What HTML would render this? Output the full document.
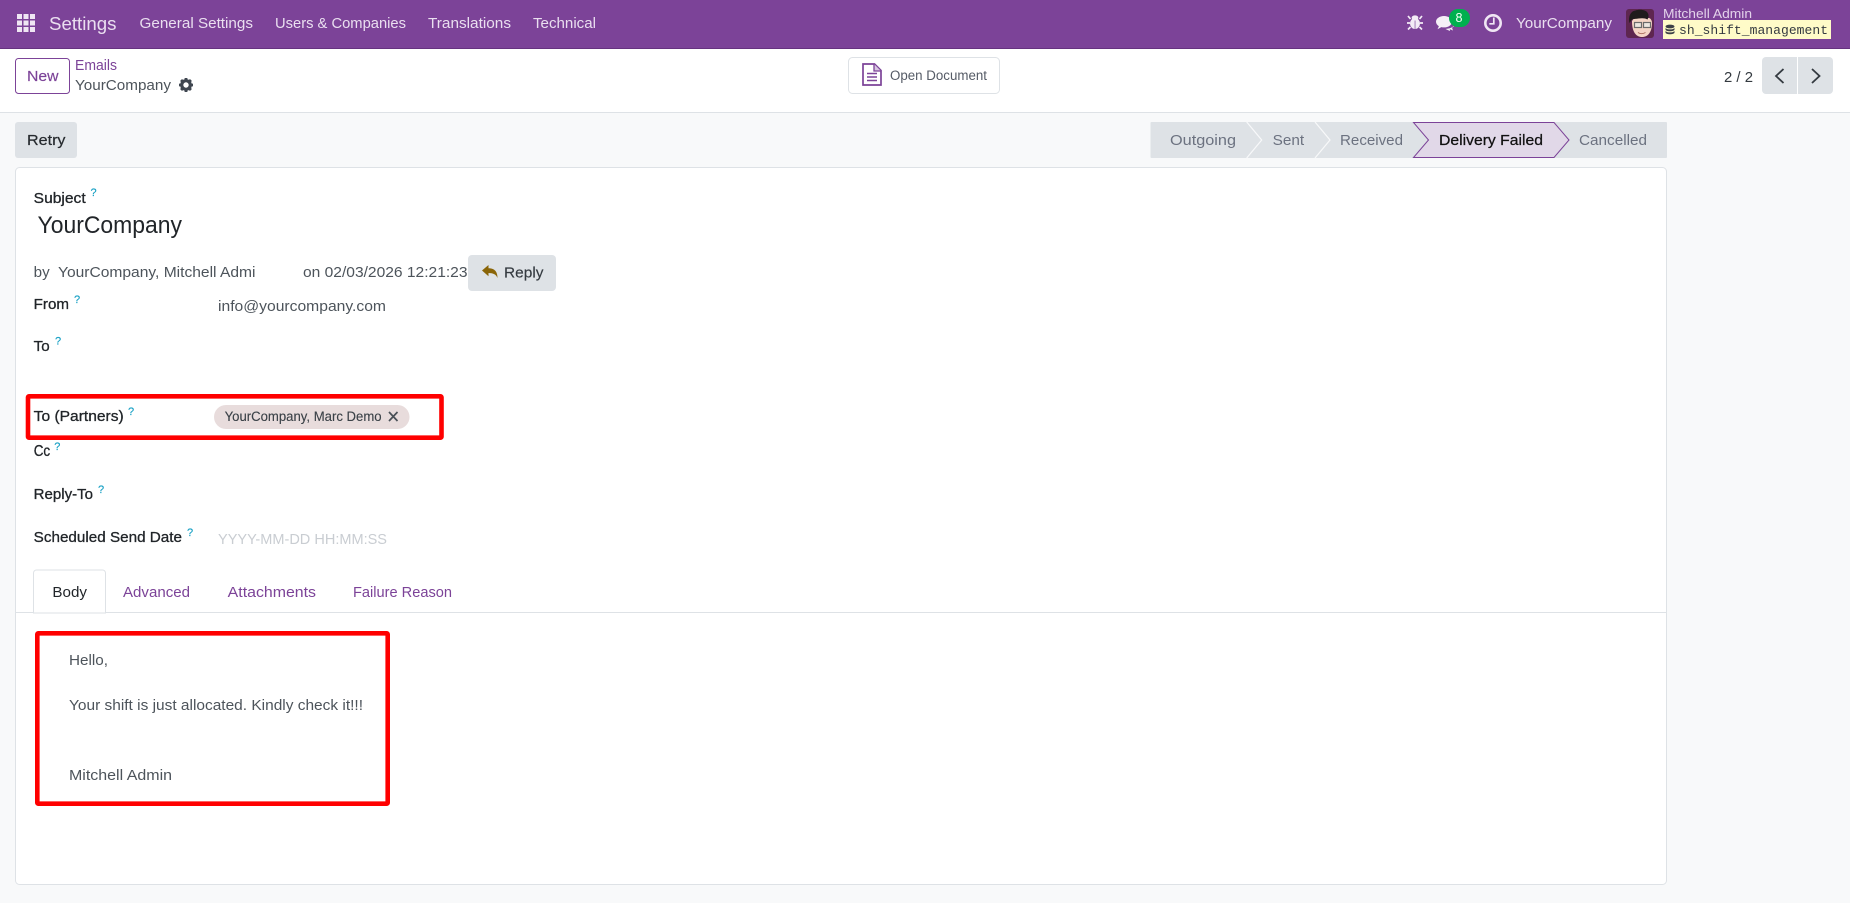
<!DOCTYPE html>
<html lang="en"><head><meta charset="utf-8"><title>Emails - YourCompany</title>
<style>
html,body{margin:0;padding:0;width:1850px;height:903px;overflow:hidden;background:#f8f9fa}
svg{display:block}
text{font-family:"Liberation Sans",sans-serif;font-size:15px;fill:#4d545b}
.nav{fill:#eadff0}
.lbl{fill:#212529;stroke:#212529;stroke-width:.3px}
.q{fill:#17a0c4;font-size:11px;stroke:#17a0c4;stroke-width:.15px}
.p{fill:#7c4398}
.st{fill:#6c7280}
</style></head><body>
<svg width="1850" height="903" viewBox="0 0 1850 903" xmlns="http://www.w3.org/2000/svg">
<!-- navbar -->
<rect width="1850" height="49" fill="#7c4398"/>
<rect y="48" width="1850" height="1" fill="#66337f"/>
<g fill="#efe6f3">
<rect x="17" y="14" width="5" height="5"/><rect x="23.5" y="14" width="5" height="5"/><rect x="30" y="14" width="5" height="5"/>
<rect x="17" y="20.5" width="5" height="5"/><rect x="23.5" y="20.5" width="5" height="5"/><rect x="30" y="20.5" width="5" height="5"/>
<rect x="17" y="27" width="5" height="5"/><rect x="23.5" y="27" width="5" height="5"/><rect x="30" y="27" width="5" height="5"/>
</g>
<text class="nav" x="49" y="30" style="font-size:18px" textLength="67.5" lengthAdjust="spacingAndGlyphs">Settings</text>
<text class="nav" x="139.5" y="28" textLength="113.5" lengthAdjust="spacingAndGlyphs">General Settings</text>
<text class="nav" x="275" y="28" textLength="131" lengthAdjust="spacingAndGlyphs">Users &amp; Companies</text>
<text class="nav" x="428" y="28" textLength="83" lengthAdjust="spacingAndGlyphs">Translations</text>
<text class="nav" x="533" y="28" textLength="63" lengthAdjust="spacingAndGlyphs">Technical</text>
<!-- bug -->
<g fill="#f3ecf6" stroke="#f3ecf6">
<ellipse cx="1415" cy="23.500" rx="5" ry="5.500" stroke="none"/>
<ellipse cx="1415" cy="17.800" rx="3.400" ry="2.400" stroke="none"/>
<path d="M1410.500 19l-2.500-3M1419.500 19l2.500-3M1410 23h-3M1420 23h3M1410.500 27l-2.500 2.500M1419.500 27l2.500 2.500" stroke-width="1.700" fill="none"/>
</g>
<rect x="1414.600" y="20.500" width=".9" height="8.500" fill="#9a6fb0"/>
<!-- chat -->
<path d="M1444 16c-4.500 0-8 2.600-8 5.800 0 1.800 1.100 3.400 2.900 4.400l-1.400 3 3.800-2.100c.9.200 1.800.3 2.700.3 4.500 0 8-2.600 8-5.700s-3.500-5.700-8-5.700z" fill="#f5eff7"/>
<path d="M1455 22.500c0 3-2.800 5.500-6.500 6l-3 .5 4.500 2-.2-1.900 3.200 1.400-1-2.800c1.800-.9 3-2.400 3-4.200z" fill="#f5eff7"/>
<rect x="1449" y="9" width="21" height="18" rx="9" fill="#00b04f"/>
<text x="1455.500" y="22" style="fill:#f3fff6;font-size:13px" textLength="7" lengthAdjust="spacingAndGlyphs">8</text>
<!-- clock -->
<circle cx="1493" cy="23" r="7.700" fill="none" stroke="#f0e6f4" stroke-width="2.600"/>
<path d="M1493.800 17.500v6.300h-4.500" fill="none" stroke="#f0e6f4" stroke-width="1.700"/>
<text class="nav" x="1516" y="28" textLength="96" lengthAdjust="spacingAndGlyphs">YourCompany</text>
<!-- avatar -->
<rect x="1626" y="9" width="28" height="29" rx="3" fill="#5e2650"/>
<path d="M1632 21c0 11 4 16 10 16s10-5 10-14c0-3-2-5-3-5h-15z" fill="#f5d5c6"/>
<path d="M1629.500 23c-1.500-8 2-12 6-12.500 4-1.500 11-.8 12.500 3 1 2 .5 4-.5 6-2-1.500-6-1.500-9-1-2 .3-5 .5-6.500 1-1 1-1.500 2-2.500 3.500z" fill="#1f1b1c"/>
<rect x="1634.500" y="22.500" width="7" height="5" fill="#ece6e0" stroke="#6b6b6b" stroke-width="1.200"/>
<rect x="1643.500" y="22.500" width="7" height="5" fill="#ece6e0" stroke="#6b6b6b" stroke-width="1.200"/>
<path d="M1638 32.500c2 1.500 5 1.500 7.500 0" fill="none" stroke="#a86a5a" stroke-width="1"/>
<text class="nav" x="1663" y="18" style="font-size:13px;fill:#e3d2ea" textLength="89" lengthAdjust="spacingAndGlyphs">Mitchell Admin</text>
<rect x="1663" y="20" width="168" height="19" fill="#fffbc8"/>
<g fill="#3d4147">
<ellipse cx="1670" cy="26.500" rx="4.500" ry="1.900"/>
<path d="M1665.500 28v1.500c0 1 2 1.800 4.500 1.800s4.500-.8 4.500-1.800V28c-.8 1-2.500 1.400-4.500 1.400s-3.700-.4-4.500-1.400z"/>
<path d="M1665.500 31v1.500c0 1 2 1.800 4.500 1.800s4.500-.8 4.500-1.800V31c-.8 1-2.500 1.400-4.500 1.400s-3.700-.4-4.500-1.400z"/>
</g>
<text x="1679" y="34" style="font-family:'Liberation Mono',monospace;font-size:13px;fill:#343a40" textLength="149">sh_shift_management</text>

<!-- control panel -->
<rect y="49" width="1850" height="63" fill="#fff"/>
<rect y="112" width="1850" height="1" fill="#dee2e6"/>
<rect x="15.500" y="58.500" width="54" height="35" rx="3" fill="#fff" stroke="#7c4398"/>
<text class="p" x="27" y="81" style="stroke:#7c4398;stroke-width:.15px" textLength="31.500" lengthAdjust="spacingAndGlyphs">New</text>
<text class="p" x="75" y="70" textLength="42" lengthAdjust="spacingAndGlyphs">Emails</text>
<text x="75" y="90" textLength="96" lengthAdjust="spacingAndGlyphs">YourCompany</text>
<g transform="translate(186 85)">
<circle r="4.300" fill="none" stroke="#3f4650" stroke-width="3.200"/>
<path d="M-1.400-7h2.800v3h-2.800zM-1.400 4h2.800v3h-2.800zM-7-1.400h3v2.800h-3zM4-1.400h3v2.800h-3z" fill="#3f4650"/>
<path d="M-1.400-7h2.800v3h-2.800zM-1.400 4h2.800v3h-2.800zM-7-1.400h3v2.800h-3zM4-1.400h3v2.800h-3z" fill="#3f4650" transform="rotate(45)"/>
</g>
<!-- open document -->
<rect x="848.500" y="57.500" width="151" height="36" rx="4" fill="#fff" stroke="#dee2e6"/>
<path d="M863 64h11.500l6.500 6.500V85h-18z" fill="none" stroke="#7c4398" stroke-width="1.700"/>
<path d="M874 64v7h7" fill="#d9c6e2" stroke="#7c4398" stroke-width="1.300"/>
<path d="M867 73.500h10M867 77h10M867 80.500h10" stroke="#7c4398" stroke-width="1.500"/>
<text x="890" y="80" style="font-size:13.500px;fill:#555b66" textLength="97" lengthAdjust="spacingAndGlyphs">Open Document</text>
<!-- pager -->
<text x="1724" y="82" style="fill:#343a40" textLength="29" lengthAdjust="spacingAndGlyphs">2 / 2</text>
<path d="M1766 57h31v37h-31a4 4 0 0 1-4-4V61a4 4 0 0 1 4-4z" fill="#dee2e6"/>
<path d="M1798 57h31a4 4 0 0 1 4 4v29a4 4 0 0 1-4 4h-31z" fill="#dee2e6"/>
<path d="M1783.500 69l-7.500 7 7.500 7" fill="none" stroke="#343a40" stroke-width="1.800"/>
<path d="M1812 69l7.500 7-7.500 7" fill="none" stroke="#343a40" stroke-width="1.800"/>

<!-- retry -->
<rect x="15" y="122" width="62" height="36" rx="3" fill="#dee2e6"/>
<text x="27" y="145" style="fill:#262a2e;stroke:#262a2e;stroke-width:.2px" textLength="38.500" lengthAdjust="spacingAndGlyphs">Retry</text>
<!-- statusbar -->
<rect x="1150.500" y="122" width="516.500" height="36" rx="1" fill="#dee2e6"/>
<path d="M1246.700 122l15 18-15 18M1315 122l15 18-15 18" fill="none" stroke="#f8f9fa" stroke-width="1.200"/>
<path d="M1413.500 122.500h140.500l15 17.500-15 17.500h-140.500l15-17.500z" fill="#e1d8e8" stroke="#7c4398" stroke-width="1"/>
<text class="st" x="1170" y="145" textLength="66" lengthAdjust="spacingAndGlyphs">Outgoing</text>
<text class="st" x="1272.700" y="145" textLength="31.500" lengthAdjust="spacingAndGlyphs">Sent</text>
<text class="st" x="1340" y="145" textLength="63" lengthAdjust="spacingAndGlyphs">Received</text>
<text x="1439" y="145" style="fill:#111;stroke:#111;stroke-width:.25px" textLength="104" lengthAdjust="spacingAndGlyphs">Delivery Failed</text>
<text class="st" x="1579" y="145" textLength="68" lengthAdjust="spacingAndGlyphs">Cancelled</text>

<!-- card -->
<rect x="15.500" y="167.500" width="1651" height="717" rx="4" fill="#fff" stroke="#dee2e6"/>
<text class="lbl" x="33.700" y="203" textLength="52" lengthAdjust="spacingAndGlyphs">Subject</text><text class="q" x="90.500" y="196">?</text>
<text x="37.500" y="233" style="font-size:24px;fill:#212529" textLength="144.500" lengthAdjust="spacingAndGlyphs">YourCompany</text>
<text x="33.700" y="277" textLength="16" lengthAdjust="spacingAndGlyphs">by</text>
<text x="58" y="277" textLength="197.500" lengthAdjust="spacingAndGlyphs">YourCompany, Mitchell Admi</text>
<text x="303" y="277" textLength="164.500" lengthAdjust="spacingAndGlyphs">on 02/03/2026 12:21:23</text>
<rect x="468" y="255" width="88" height="36" rx="4" fill="#dee2e6"/>
<path d="M482 270.500l6.500-5.500v3.300c5 0 9 2.300 9 9.700-1.500-3.700-4.500-5-9-5v3.200z" fill="#8a6508"/>
<text x="504" y="277.500" style="fill:#343a40;stroke:#343a40;stroke-width:.15px" textLength="39.500" lengthAdjust="spacingAndGlyphs">Reply</text>

<text class="lbl" x="33.700" y="309" textLength="35.300" lengthAdjust="spacingAndGlyphs">From</text><text class="q" x="74" y="303">?</text>
<text x="218" y="311" textLength="168" lengthAdjust="spacingAndGlyphs">info@yourcompany.com</text>
<text class="lbl" x="33.700" y="351" textLength="16" lengthAdjust="spacingAndGlyphs">To</text><text class="q" x="55" y="344.500">?</text>

<text class="lbl" x="33.700" y="421" textLength="90" lengthAdjust="spacingAndGlyphs">To (Partners)</text><text class="q" x="128" y="415">?</text>
<rect x="214" y="405" width="195.500" height="24" rx="12" fill="#e8dcdc"/>
<text x="224.600" y="421" style="font-size:13.500px;fill:#3a4147;stroke:#3a4147;stroke-width:.12px" textLength="157" lengthAdjust="spacingAndGlyphs">YourCompany, Marc Demo</text>
<path d="M389 412l8.500 9M397.500 412l-8.500 9" stroke="#495057" stroke-width="1.700" fill="none"/>
<rect x="28" y="396.300" width="413.500" height="41.400" rx="1" fill="none" stroke="#ff0000" stroke-width="4.600"/>

<text class="lbl" x="33.700" y="456" style="font-size:15.500px" textLength="16.500" lengthAdjust="spacingAndGlyphs">Cc</text><text class="q" x="54.200" y="450">?</text>
<text class="lbl" x="33.700" y="499" textLength="59.300" lengthAdjust="spacingAndGlyphs">Reply-To</text><text class="q" x="98" y="493">?</text>
<text class="lbl" x="33.700" y="542" textLength="148.300" lengthAdjust="spacingAndGlyphs">Scheduled Send Date</text><text class="q" x="187" y="536">?</text>
<text x="218" y="544" style="fill:#c9cdd2" textLength="169" lengthAdjust="spacingAndGlyphs">YYYY-MM-DD HH:MM:SS</text>

<!-- tabs -->
<rect x="16" y="612" width="1650" height="1" fill="#dee2e6"/>
<path d="M33.500 613V573a3 3 0 0 1 3-3h66a3 3 0 0 1 3 3v40z" fill="#fff" stroke="#dee2e6"/>
<text x="52.400" y="597" style="fill:#212529" textLength="34.600" lengthAdjust="spacingAndGlyphs">Body</text>
<text class="p" x="123" y="597" textLength="67" lengthAdjust="spacingAndGlyphs">Advanced</text>
<text class="p" x="227.700" y="597" textLength="88.300" lengthAdjust="spacingAndGlyphs">Attachments</text>
<text class="p" x="353" y="597" textLength="99" lengthAdjust="spacingAndGlyphs">Failure Reason</text>

<rect x="37.300" y="633.300" width="350.400" height="170.400" rx="1" fill="none" stroke="#ff0000" stroke-width="4.600"/>
<text x="69" y="665" textLength="39" lengthAdjust="spacingAndGlyphs">Hello,</text>
<text x="69" y="710" textLength="294" lengthAdjust="spacingAndGlyphs">Your shift is just allocated. Kindly check it!!!</text>
<text x="69" y="780" textLength="103" lengthAdjust="spacingAndGlyphs">Mitchell Admin</text>
</svg>
</body></html>
